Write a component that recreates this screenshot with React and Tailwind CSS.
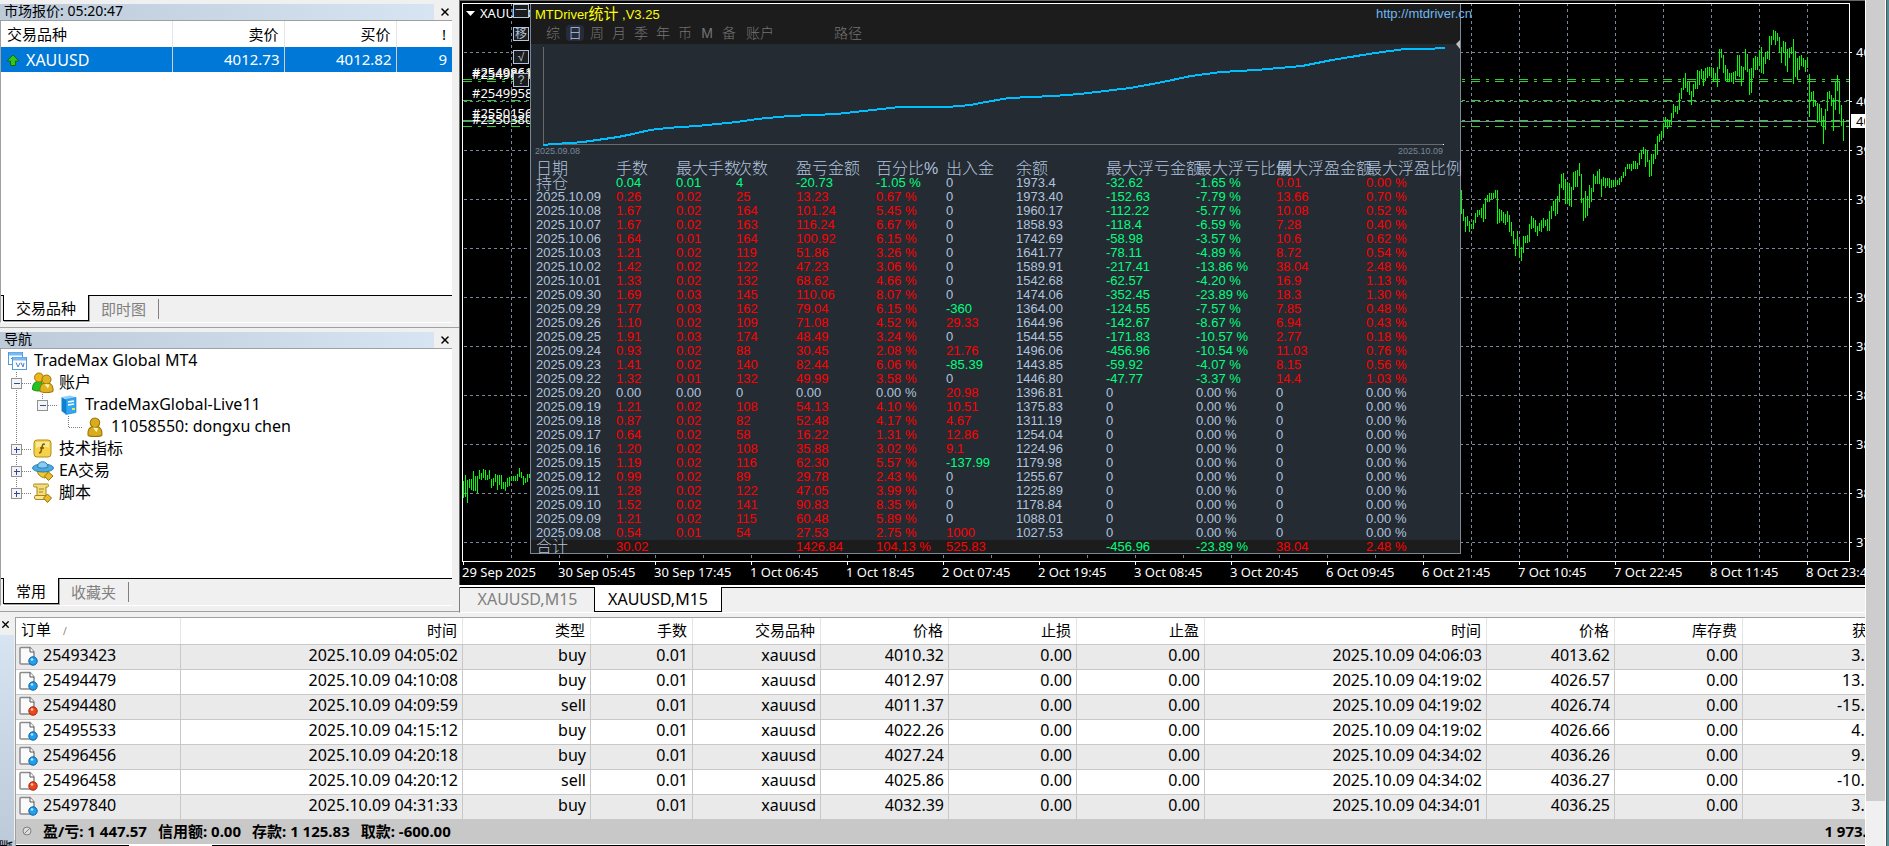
import { X } from "lucide-react";

const uiFont = "font-['Noto_Sans','Noto_Sans_CJK_SC',sans-serif]";
const panelFont = "font-['Liberation_Sans','Noto_Sans_CJK_SC',sans-serif]";

const timeLabels = [
  "29 Sep 2025",
  "30 Sep 05:45",
  "30 Sep 17:45",
  "1 Oct 06:45",
  "1 Oct 18:45",
  "2 Oct 07:45",
  "2 Oct 19:45",
  "3 Oct 08:45",
  "3 Oct 20:45",
  "6 Oct 09:45",
  "6 Oct 21:45",
  "7 Oct 10:45",
  "7 Oct 22:45",
  "8 Oct 11:45",
  "8 Oct 23:45",
];

const priceLabels = ["40", "40", "39", "39", "39", "39", "38", "38", "38", "38", "37"];

// high-low of each bar, three units per pixel
const barsLeft =
  "1443-1494 1425-1490 1440-1508 1437-1464 1437-1469 1413-1474 1428-1473 1428-1480 1410-1438 1419-1440 1407-1434 1410-1440 1425-1440 1410-1437 1437-1463 1434-1458 1422-1445 1425-1470 1425-1455 1425-1466 1446-1468 1446-1473 1434-1461 1431-1458 1428-1444 1428-1442 1428-1442 1421-1442 1404-1430 1416-1434 1428-1455 1434-1449 1421-1446 1421-1434";
const barsRight =
  "570-641 627-662 650-696 648-679 662-695 672-686 660-686 640-668 630-650 630-646 624-655 612-665 594-657 585-605 579-605 579-597 579-597 570-594 570-671 627-668 630-664 636-668 642-674 633-665 645-696 666-707 692-731 716-768 693-739 720-774 741-783 708-759 708-729 705-729 672-726 648-686 654-683 660-695 678-707 669-693 660-695 654-683 660-677 657-692 633-692 618-656 603-632 597-647 588-641 552-605 522-563 519-570 537-611 546-611 549-617 561-620 516-569 513-560 510-560 489-528 522-609 594-662 573-653 588-647 555-623 564-605 522-575 528-551 513-551 507-551 537-590 531-557 534-563 534-557 534-563 540-563 540-560 540-560 540-555 534-554 528-546 516-533 501-528 492-506 492-506 492-512 483-506 483-506 489-506 459-494 450-476 441-461 447-500 450-485 480-530 462-527 462-491 432-476 408-464 402-426 393-419 369-412 351-381 357-386 360-380 339-375 312-354 318-336 318-342 279-330 264-297 234-270 219-263 246-276 243-285 273-315 252-290 243-266 210-267 213-255 207-236 213-258 204-244 201-234 201-228 201-231 204-245 219-239 201-261 147-207 147-174 165-219 195-242 207-245 219-245 219-247 216-251 213-240 165-228 165-230 198-258 201-241 147-210 162-216 207-285 204-279 174-234 168-209 171-209 150-198 141-218 171-221 156-191 153-177 108-180 108-134 90-120 93-134 99-123 111-158 141-189 123-158 126-198 147-216 144-174 141-161 117-251 153-231 174-240 168-210 165-198 174-200 180-215 171-204 222-350 276-303 273-320 300-318 309-368 312-362 324-378 348-432 327-389 276-333 273-297 285-317 294-392 246-330 225-272 243-342 315-377 357-423";

function Bars({ data, x }) {
  return data.split(" ").map((bar, i) => {
    const [hi, lo] = bar.split("-").map((v) => Math.round(v / 3));
    return (
      <rect key={i} x={x + i * 2} y={hi} width="1" height={lo - hi} fill="#00ff00" />
    );
  });
}

function PriceChart() {
  return (
    <svg
      className="absolute inset-0 w-full h-full font-['Noto_Sans',sans-serif] text-[13px]"
      shapeRendering="crispEdges"
      aria-label="XAUUSD M15"
    >
      <g transform="translate(-459 0)">
        <rect x="459" y="0" width="2000" height="1" fill="#696969" />
        <rect x="459" y="0" width="1" height="585" fill="#696969" />
        <g stroke="#778899" strokeDasharray="3 3">
          {priceLabels.map((_, i) => (
            <line key={i} x1="464" x2="1849" y1={52.5 + i * 49} y2={52.5 + i * 49} />
          ))}
          {Array.from({ length: 28 }, (_, i) => (
            <line key={i} x1={511.5 + i * 48} x2={511.5 + i * 48} y1="3" y2="558" />
          ))}
        </g>
        <g stroke="#32cd32" strokeDasharray="9 6 3 6">
          {[79, 81, 100, 120, 126].map((y) => (
            <line key={y} x1="463" x2="1849" y1={y + 0.5} y2={y + 0.5} />
          ))}
        </g>
        <rect x="463" y="121" width="1386" height="1" fill="#778899" />
        <Bars data={barsLeft} x={463} />
        <Bars data={barsRight} x={1461} />

        <path d="M462.5 561V3.5H1849.5V561.5H462" fill="none" stroke="#fff" />
        <g fill="#fff">
          {timeLabels.map((label, i) => (
            <g key={label}>
              <rect x={463 + i * 96} y="562" width="1" height="3" />
              <text x={462 + i * 96} y="577">
                {label}
              </text>
            </g>
          ))}
          {priceLabels.map((label, i) => (
            <g key={i}>
              <rect x="1850" y={52 + i * 49} width="2" height="1" />
              <text x="1856" y={57 + i * 49}>
                {label}
              </text>
            </g>
          ))}
          <rect x="1851" y="114" width="40" height="14" />
          <text x="1856" y="126" fill="#000">
            4012.73
          </text>
          <path d="M466 11h9l-4.5 5z" shapeRendering="auto" />
          <text x="480" y="18">
            XAUUSD,M15
          </text>
          <text x="472" y="77">#25498613</text>
          <text x="472" y="79">#25498617</text>
          <text x="472" y="98">#25499582</text>
          <text x="472" y="118">#25501562</text>
          <text x="472" y="124">#25503802</text>
        </g>
      </g>
    </svg>
  );
}

const views = ["综", "日", "周", "月", "季", "年", "币", "M", "备"];

const statHeads = [
  "日期",
  "手数",
  "最大手数",
  "次数",
  "盈亏金额",
  "百分比%",
  "出入金",
  "余额",
  "最大浮亏金额",
  "最大浮亏比例",
  "最大浮盈金额",
  "最大浮盈比例",
];

const statRows = [
  ["持仓", "0.04", "0.01", "4", "-20.73", "-1.05 %", "0", "1973.4", "-32.62", "-1.65 %", "0.01", "0.00 %"],
  ["2025.10.09", "0.26", "0.02", "25", "13.23", "0.67 %", "0", "1973.40", "-152.63", "-7.79 %", "13.66", "0.70 %"],
  ["2025.10.08", "1.67", "0.02", "164", "101.24", "5.45 %", "0", "1960.17", "-112.22", "-5.77 %", "10.08", "0.52 %"],
  ["2025.10.07", "1.67", "0.02", "163", "116.24", "6.67 %", "0", "1858.93", "-118.4", "-6.59 %", "7.28", "0.40 %"],
  ["2025.10.06", "1.64", "0.01", "164", "100.92", "6.15 %", "0", "1742.69", "-58.98", "-3.57 %", "10.6", "0.62 %"],
  ["2025.10.03", "1.21", "0.02", "119", "51.86", "3.26 %", "0", "1641.77", "-78.11", "-4.89 %", "8.72", "0.54 %"],
  ["2025.10.02", "1.42", "0.02", "122", "47.23", "3.06 %", "0", "1589.91", "-217.41", "-13.86 %", "38.04", "2.48 %"],
  ["2025.10.01", "1.33", "0.02", "132", "68.62", "4.66 %", "0", "1542.68", "-62.57", "-4.20 %", "16.9", "1.13 %"],
  ["2025.09.30", "1.69", "0.03", "145", "110.06", "8.07 %", "0", "1474.06", "-352.45", "-23.89 %", "18.3", "1.30 %"],
  ["2025.09.29", "1.77", "0.03", "162", "79.04", "6.15 %", "-360", "1364.00", "-124.55", "-7.57 %", "7.85", "0.48 %"],
  ["2025.09.26", "1.10", "0.02", "109", "71.08", "4.52 %", "29.33", "1644.96", "-142.67", "-8.67 %", "6.94", "0.43 %"],
  ["2025.09.25", "1.91", "0.03", "174", "48.49", "3.24 %", "0", "1544.55", "-171.83", "-10.57 %", "2.77", "0.18 %"],
  ["2025.09.24", "0.93", "0.02", "88", "30.45", "2.08 %", "21.76", "1496.06", "-456.96", "-10.54 %", "11.03", "0.76 %"],
  ["2025.09.23", "1.41", "0.02", "140", "82.44", "6.06 %", "-85.39", "1443.85", "-59.92", "-4.07 %", "8.15", "0.56 %"],
  ["2025.09.22", "1.32", "0.01", "132", "49.99", "3.58 %", "0", "1446.80", "-47.77", "-3.37 %", "14.4", "1.03 %"],
  ["2025.09.20", "0.00", "0.00", "0", "0.00", "0.00 %", "20.98", "1396.81", "0", "0.00 %", "0", "0.00 %"],
  ["2025.09.19", "1.21", "0.02", "108", "54.13", "4.10 %", "10.51", "1375.83", "0", "0.00 %", "0", "0.00 %"],
  ["2025.09.18", "0.87", "0.02", "82", "52.48", "4.17 %", "4.67", "1311.19", "0", "0.00 %", "0", "0.00 %"],
  ["2025.09.17", "0.64", "0.02", "58", "16.22", "1.31 %", "12.86", "1254.04", "0", "0.00 %", "0", "0.00 %"],
  ["2025.09.16", "1.20", "0.02", "108", "35.88", "3.02 %", "9.1", "1224.96", "0", "0.00 %", "0", "0.00 %"],
  ["2025.09.15", "1.19", "0.02", "116", "62.30", "5.57 %", "-137.99", "1179.98", "0", "0.00 %", "0", "0.00 %"],
  ["2025.09.12", "0.99", "0.02", "89", "29.78", "2.43 %", "0", "1255.67", "0", "0.00 %", "0", "0.00 %"],
  ["2025.09.11", "1.28", "0.02", "122", "47.05", "3.99 %", "0", "1225.89", "0", "0.00 %", "0", "0.00 %"],
  ["2025.09.10", "1.52", "0.02", "141", "90.83", "8.35 %", "0", "1178.84", "0", "0.00 %", "0", "0.00 %"],
  ["2025.09.09", "1.21", "0.02", "115", "60.48", "5.89 %", "0", "1088.01", "0", "0.00 %", "0", "0.00 %"],
  ["2025.09.08", "0.54", "0.01", "54", "27.53", "2.75 %", "1000", "1027.53", "0", "0.00 %", "0", "0.00 %"],
];

const statTotal = ["合计", "30.02", "", "", "1426.84", "104.13 %", "525.83", "", "-456.96", "-23.89 %", "38.04", "2.48 %"];

// which column decides the sign of each cell: lots and counts follow the
// profit, every ratio follows its own amount
const signColumn = [null, 4, 4, 4, 4, 4, 6, null, 8, 8, 10, 10];

function cellColor(row, i) {
  const value = signColumn[i] === null ? 0 : parseFloat(row[signColumn[i]]);
  if (!value) return "text-[#b0c4de]";
  return value < 0 ? "text-[#00ff7f]" : "text-[#ff0000]";
}

function StatCells({ row }) {
  return row.map((cell, i) => (
    <td key={i} className={`p-0 ${i === 0 ? "pl-[5px]" : ""} ${cellColor(row, i)}`}>
      {/^\d/.test(cell) || i > 0 ? (
        cell
      ) : (
        <span className="block h-[13px] text-base leading-[13px] font-light">{cell}</span>
      )}
    </td>
  ));
}

function StatsPanel() {
  return (
    <section
      className={`absolute left-[71px] top-[4px] w-[931px] flex flex-col border-x border-b border-[#778899] bg-[#252b33] text-[13px] leading-[14px] ${panelFont}`}
    >
      <header className="h-10 bg-[#1c1c1c]">
        <div className="flex h-5 items-center justify-between pl-1">
          <h1 className="whitespace-nowrap text-[#ffff00]">
            MTDriver<span className="text-[15px]">统计</span> ,V3.25
          </h1>
          <a href="http://mtdriver.cn" className="-mr-3 whitespace-nowrap text-[#6cb8f0]">
            http://mtdriver.cn
          </a>
        </div>
        <nav className="flex h-[18px] items-center gap-1 pl-[13px] text-sm leading-4 font-light text-[#757575]">
          {views.map((v) => (
            <button
              key={v}
              className={
                v === "日"
                  ? "h-4 w-[18px] rounded-sm bg-[#252b3a] text-[#b0c4de]"
                  : "h-4 w-[18px]"
              }
            >
              {v}
            </button>
          ))}
          <button className="ml-1 h-4">账户</button>
          <button className="ml-14 h-4">路径</button>
        </nav>
      </header>

      <div className="relative h-[118px]">
        <svg className="absolute inset-0 h-full w-full overflow-visible" aria-hidden="true">
          <g transform="translate(-531 -44)">
            <path d="M543.5 47V144.5H1443" fill="none" stroke="#696969" />
            <rect x="1443" y="144" width="1" height="1" fill="#fff" />
            <polyline
              points="543,145 553,144 572,143 583,142 597,140 618,137 633,134 650,130 667,128 697,126 717,124 737,122 757,119 790,116 813,115 837,114 863,111 900,107 947,107 971,105 980,103 1009,98 1053,96 1080,94 1130,88 1158,83 1191,76 1221,72 1256,70 1302,66 1332,60 1375,53 1405,49 1426,49 1445,48"
              fill="none"
              stroke="#00bfff"
              strokeWidth="2"
              shapeRendering="crispEdges"
            />
            <path d="M1460 40l-4 4 4 5z" fill="#c0c0c0" />
          </g>
        </svg>
        <div className="flex h-full items-end justify-between pb-1 pl-1 pr-[17px] text-[9px] text-[#778899]">
          <span>2025.09.08</span>
          <span>2025.10.09</span>
        </div>
      </div>

      <table className="w-full table-fixed border-collapse whitespace-nowrap text-left">
        <colgroup>
          <col className="w-[85px]" />
          <col className="w-[60px]" />
          <col className="w-[60px]" />
          <col className="w-[60px]" />
          <col className="w-[80px]" />
          <col className="w-[70px]" />
          <col className="w-[70px]" />
          <col className="w-[90px]" />
          <col className="w-[90px]" />
          <col className="w-[80px]" />
          <col className="w-[90px]" />
          <col />
        </colgroup>
        <thead>
          <tr className="h-[14px] text-base leading-[14px] text-[#b0c4de]">
            {statHeads.map((h, i) => (
              <th key={h} className={`p-0 font-light ${i === 0 ? "pl-[5px]" : ""}`}>
                {h}
              </th>
            ))}
          </tr>
        </thead>
        <tbody>
          {statRows.map((row) => (
            <tr key={row[0]} className="h-[14px]">
              <StatCells row={row} />
            </tr>
          ))}
        </tbody>
        <tfoot>
          <tr className="h-[13px] bg-[#1c1c1c] leading-[13px]">
            <StatCells row={statTotal} />
          </tr>
        </tfoot>
      </table>
    </section>
  );
}

function ChartWindow() {
  return (
    <div className="flex min-w-0 flex-1 flex-col">
      <div className="relative flex-1 overflow-hidden bg-black">
        <PriceChart />
        <div
          className={`absolute left-[54px] top-[4px] flex flex-col gap-[9px] text-[12px] text-[#b0c4de] ${panelFont}`}
        >
          {["一", "移", "√", "?"].map((label) => (
            <button
              key={label}
              className="h-[14px] w-4 border border-[#b0c4de] bg-[#1c1c1c] leading-[11px]"
            >
              {label}
            </button>
          ))}
        </div>
        <StatsPanel />
      </div>
      <div className="h-8 shrink-0 border-t-2 border-white">
        <div className="flex h-[26px] items-start border-b border-l border-b-white border-l-[#808080] text-base shadow-[inset_0_1px_0_#000]">
          <button className="ml-[1px] h-6 w-[133px] leading-[22px] text-[#808080]">XAUUSD,M15</button>
          <button className="h-[25px] w-32 border-x border-b border-black bg-white leading-[22px]">
            XAUUSD,M15
          </button>
        </div>
      </div>
    </div>
  );
}

function PanelTitle({ children }) {
  return (
    <div className="flex h-[17px] shrink-0 items-center">
      <h2 className="h-4 flex-1 bg-linear-to-r from-[#bccad9] to-[#d7e4f2] pl-1 text-[14px] leading-[14px]">
        {children}
      </h2>
      <button className="flex w-[25px] justify-center pr-1" aria-label="关闭">
        <X size={12} strokeWidth={3} />
      </button>
    </div>
  );
}

function PanelTabs({ active, other }) {
  return (
    <div className="flex h-[27px] shrink-0 items-start border-t border-black bg-[#f0f0f0] pl-[2px] text-[15px]">
      <button className="-mt-px h-[26px] border-x border-b border-black bg-white px-3 leading-[22px] shadow-[1px_1px_0_#a0a0a0]">
        {active}
      </button>
      <button className="mt-[3px] h-5 border-r border-[#808080] px-3 leading-4 text-[#808080]">
        {other}
      </button>
    </div>
  );
}

function MarketWatch() {
  return (
    <section className="flex h-[328px] shrink-0 flex-col border-b border-[#a0a0a0] pt-[3px] pb-1">
      <PanelTitle>市场报价: 05:20:47</PanelTitle>
      <div className="mr-[7px] flex flex-1 flex-col border-t border-l border-b border-[#a0a0a0] border-b-white bg-white">
        <table className="w-full table-fixed border-collapse text-[15px]">
          <colgroup>
            <col />
            <col className="w-28" />
            <col className="w-28" />
            <col className="w-14" />
          </colgroup>
          <thead>
            <tr className="h-[26px]">
              <th className="border-r border-[#e5e5e5] p-0 pl-[6px] text-left font-normal">交易品种</th>
              <th className="border-r border-[#e5e5e5] p-0 pr-[5px] text-right font-normal">卖价</th>
              <th className="border-r border-[#e5e5e5] p-0 pr-[5px] text-right font-normal">买价</th>
              <th className="p-0 pr-[6px] text-right font-normal">!</th>
            </tr>
          </thead>
          <tbody>
            <tr className="h-[25px] bg-[#0078d7] text-white">
              <td className="border-r border-[#d0d0d0] p-0 pl-[5px]">
                <span className="flex items-center gap-[6px]">
                  <svg width="14" height="14" viewBox="0 0 14 14" aria-hidden="true">
                    <path
                      d="M7 2l6 6H9.500v4.500h-5V8H1z"
                      fill="#2fc81c"
                      stroke="#14690c"
                      strokeLinejoin="round"
                    />
                  </svg>
                  <span className="text-base leading-6">XAUUSD</span>
                </span>
              </td>
              <td className="border-r border-[#d0d0d0] p-0 pr-1 text-right">4012.73</td>
              <td className="border-r border-[#d0d0d0] p-0 pr-1 text-right">4012.82</td>
              <td className="p-0 pr-[5px] text-right">9</td>
            </tr>
          </tbody>
        </table>
        <div className="flex-1" />
        <PanelTabs active="交易品种" other="即时图" />
      </div>
    </section>
  );
}

// dotted connectors and the +/- box in front of a tree row
function Branch({ width, trunk = "full", box, boxAt = 15, elbow }) {
  return (
    <svg width={width} height="22" className="shrink-0" shapeRendering="crispEdges" aria-hidden="true">
      <g stroke="#808080" strokeDasharray="1 1">
        {trunk === "full" && <path d="M15.500 0V22" />}
        {trunk === "end" && <path d="M15.500 0V11" />}
        {box && boxAt !== 15 && <path d={`M${boxAt + 0.5} 0V11`} />}
        {elbow && <path d={`M${elbow + 0.5} 0V11.500H${width}`} fill="none" />}
        {box && <path d={`M${boxAt} 11.500H${width}`} />}
      </g>
      {box && (
        <>
          <rect x={boxAt - 4.5} y="6.500" width="10" height="10" fill="#f4f4f4" stroke="#919191" />
          <rect x={boxAt - 2} y="11" width="6" height="1" fill="#2b4b9b" />
          {box === "+" && <rect x={boxAt} y="9" width="1" height="6" fill="#2b4b9b" />}
        </>
      )}
    </svg>
  );
}

function Person({ fill, stroke = "#9a7400" }) {
  return (
    <g fill={fill} stroke={stroke}>
      <path d="M1 17.500c-.6-4.500 1-7.500 4-8.500h5c3 1 4.500 4 4 8.500-3 1.500-10 1.500-13 0z" />
      <circle cx="7.500" cy="5.500" r="4.500" />
      <path d="M5.500 10l3.500 4.500 1.500-4" fill="#fff3b0" stroke="none" />
    </g>
  );
}

const treeIcons = {
  root: (
    <svg width="20" height="20" viewBox="0 0 20 20" aria-hidden="true">
      <rect x=".5" y="1.500" width="14" height="12" fill="#fff" stroke="#4f9be0" />
      <path d="M1 3h13" stroke="#79b8f0" strokeWidth="3" />
      <path d="M3 8l2-2 2 3 2-3" fill="none" stroke="#5580c0" />
      <rect x="4.500" y="6.500" width="14" height="12" fill="#fff" stroke="#4f9be0" />
      <path d="M5 8h13" stroke="#79b8f0" strokeWidth="3" />
      <path d="M8 11.500l2 4.500 2-4M13 11.500l2 4.500 1-4" fill="none" stroke="#5580c0" />
    </svg>
  ),
  accounts: (
    <svg width="22" height="22" viewBox="0 0 22 22" aria-hidden="true">
      <path d="M.5 17.500c0-5 1.500-7 4.500-8h5v9c-4 .8-7 .6-9.500-1z" fill="#22c322" stroke="#0c8a12" />
      <circle cx="7" cy="5.500" r="4.500" fill="#f0b51e" stroke="#a57a05" />
      <g transform="translate(7 2)">
        <Person fill="#e0b322" />
      </g>
    </svg>
  ),
  server: (
    <svg width="16" height="20" viewBox="0 0 16 20" aria-hidden="true">
      <path d="M.5 2L5 4.500v15L.5 16z" fill="#0f7fd0" />
      <path d="M.5 2L9 .5l6 2L5 4.500z" fill="#8fd3ff" />
      <path d="M5 4.500l10-2v15l-10 2z" fill="#2ea7f5" stroke="#1779c4" strokeWidth=".6" />
      <path d="M7 7l6-1M7 10l6-1" stroke="#fff" strokeWidth="1.500" />
      <rect x="11" y="13" width="3" height="2" fill="#f6e04a" />
    </svg>
  ),
  user: (
    <svg width="17" height="20" viewBox="0 0 16 19" aria-hidden="true">
      <Person fill="#d9ac1f" />
    </svg>
  ),
  indicator: (
    <svg width="20" height="20" viewBox="0 0 20 20" aria-hidden="true">
      <rect x="1" y="1" width="17" height="17" rx="3" fill="#f6d24c" stroke="#b48c10" />
      <path d="M3 3h13v6c-4-2-9-2-13 0z" fill="#fbe99a" />
      <path d="M12 5.500c-1.500-1-2.300-.2-2.700 1.500L8 12.500c-.3 1.200-1 1.500-2 1M7 9h4" fill="none" stroke="#7a5b00" strokeWidth="1.500" />
    </svg>
  ),
  expert: (
    <svg width="22" height="20" viewBox="0 0 22 20" aria-hidden="true">
      <path d="M5 8c0 5 3 8 8 9l4-8z" fill="#f2c833" stroke="#a57a05" />
      <ellipse cx="11" cy="7" rx="10.500" ry="4" fill="#4fa9dc" stroke="#2a7db0" />
      <path d="M5.500 6c0-7 10-7 10.500 0-3 1.500-8 1.500-10.500 0z" fill="#86cdf0" stroke="#2a7db0" />
      <path d="M16.500 11l4.500 4-4.500 4.500-4-4.500z" fill="#e8bd2d" stroke="#9a7400" />
    </svg>
  ),
  script: (
    <svg width="20" height="20" viewBox="0 0 20 20" aria-hidden="true">
      <path d="M1.500 1h13c1.500 0 1.500 3 0 3H13v9H4V4H1.500C0 4 0 1 1.500 1z" fill="#f3dc7c" stroke="#a88618" />
      <path d="M2 12.500h10l2 4H3c-1.500 0-2-2.500-1-4z" fill="#f7e69a" stroke="#a88618" />
      <path d="M6 6h5M6 9h4" stroke="#a88618" />
      <path d="M14.500 11l4 4-4 4.500-4-4.500z" fill="#e8bd2d" stroke="#9a7400" />
    </svg>
  ),
};

const tree = [
  { label: "TradeMax Global MT4", icon: "root", branch: { width: 5, trunk: "none" } },
  { label: "账户", icon: "accounts", branch: { width: 30, box: "-" } },
  { label: "TradeMaxGlobal-Live11", icon: "server", branch: { width: 56, box: "-", boxAt: 41 } },
  { label: "11058550: dongxu chen", icon: "user", branch: { width: 82, elbow: 67 } },
  { label: "技术指标", icon: "indicator", branch: { width: 30, box: "+" } },
  { label: "EA交易", icon: "expert", branch: { width: 30, box: "+" } },
  { label: "脚本", icon: "script", branch: { width: 30, box: "+", trunk: "end" } },
];

function Navigator() {
  return (
    <section className="mb-[5px] flex flex-1 flex-col border-b border-[#a0a0a0] pt-[3px] pb-[5px]">
      <PanelTitle>导航</PanelTitle>
      <div className="mr-[7px] flex flex-1 flex-col border-t border-l border-b border-[#a0a0a0] border-b-white bg-white">
        <ul className="flex-1 pt-px text-base leading-5">
          {tree.map(({ label, icon, branch }) => (
            <li key={label} className="flex h-[22px] items-center whitespace-nowrap">
              <Branch {...branch} />
              <span className="flex w-6 shrink-0 justify-center">{treeIcons[icon]}</span>
              <span className="ml-1 pb-[2px]">{label}</span>
            </li>
          ))}
        </ul>
        <PanelTabs active="常用" other="收藏夹" />
      </div>
    </section>
  );
}

const orderHeads = ["时间", "类型", "手数", "交易品种", "价格", "止损", "止盈", "时间", "价格", "库存费", "获利"];

const orders = [
  ["25493423", "2025.10.09 04:05:02", "buy", "0.01", "xauusd", "4010.32", "0.00", "0.00", "2025.10.09 04:06:03", "4013.62", "0.00", "3.30"],
  ["25494479", "2025.10.09 04:10:08", "buy", "0.01", "xauusd", "4012.97", "0.00", "0.00", "2025.10.09 04:19:02", "4026.57", "0.00", "13.60"],
  ["25494480", "2025.10.09 04:09:59", "sell", "0.01", "xauusd", "4011.37", "0.00", "0.00", "2025.10.09 04:19:02", "4026.74", "0.00", "-15.37"],
  ["25495533", "2025.10.09 04:15:12", "buy", "0.01", "xauusd", "4022.26", "0.00", "0.00", "2025.10.09 04:19:02", "4026.66", "0.00", "4.40"],
  ["25496456", "2025.10.09 04:20:18", "buy", "0.01", "xauusd", "4027.24", "0.00", "0.00", "2025.10.09 04:34:02", "4036.26", "0.00", "9.02"],
  ["25496458", "2025.10.09 04:20:12", "sell", "0.01", "xauusd", "4025.86", "0.00", "0.00", "2025.10.09 04:34:02", "4036.27", "0.00", "-10.41"],
  ["25497840", "2025.10.09 04:31:33", "buy", "0.01", "xauusd", "4032.39", "0.00", "0.00", "2025.10.09 04:34:01", "4036.25", "0.00", "3.86"],
];

function OrderIcon({ type }) {
  return (
    <svg width="20" height="20" viewBox="0 0 20 20" className="shrink-0" aria-hidden="true">
      <path d="M2 1.500h9l4 4.500v12H2c-.6 0-1-.4-1-1v-14.500c0-.6.4-1 1-1z" fill="#fafafa" stroke="#8a8a8a" strokeWidth="1.500" />
      <path d="M11 1.500V6h4" fill="#fff" stroke="#555" />
      <circle
        cx="14"
        cy="15"
        r="4.200"
        fill={type === "buy" ? "#1e9ff0" : "#f0471a"}
        stroke={type === "buy" ? "#0d5f9c" : "#9c2408"}
      />
      <circle cx="13" cy="13.500" r="1.300" fill="#fff" opacity=".7" />
    </svg>
  );
}

function Terminal() {
  return (
    <section className="flex shrink-0">
      <div className="flex w-[15px] shrink-0 flex-col">
        <button className="mb-1 flex h-[14px] items-center" aria-label="关闭">
          <X size={11} strokeWidth={3} />
        </button>
        <div className="w-[14px] flex-1 bg-linear-to-t from-[#bccad9] to-[#d7e4f2]" />
        <div className="h-[6px] overflow-hidden bg-[#bccad9] text-[14px] leading-[14px]">
          <span className="block rotate-180 [writing-mode:vertical-rl]">端</span>
        </div>
      </div>
      <div className="min-w-0 flex-1 overflow-hidden border-t border-l border-[#a0a0a0]">
        <table className="w-[1872px] table-fixed border-separate border-spacing-0 whitespace-nowrap text-right text-[15px] leading-[22px]">
          <colgroup>
            <col className="w-[165px]" />
            <col className="w-[282px]" />
            <col className="w-[128px]" />
            <col className="w-[102px]" />
            <col className="w-[128px]" />
            <col className="w-[128px]" />
            <col className="w-[128px]" />
            <col className="w-[128px]" />
            <col className="w-[282px]" />
            <col className="w-[128px]" />
            <col className="w-[128px]" />
            <col className="w-[145px]" />
          </colgroup>
          <thead>
            <tr className="h-[26px] bg-white">
              <th className="border-r border-[#e5e5e5] p-0 pb-[2px] pl-[5px] text-left font-normal">
                订单<span className="ml-3 text-[10px] text-[#808080]">/</span>
              </th>
              {orderHeads.map((h, i) => (
                <th key={i} className="border-r border-[#e5e5e5] p-0 pr-[5px] pb-[2px] font-normal">
                  {h}
                </th>
              ))}
            </tr>
          </thead>
          <tbody className="text-base">
            {orders.map((order) => (
              <tr key={order[0]} className="h-[25px] odd:bg-[#eaeaea] even:bg-white">
                {order.map((cell, i) => (
                  <td
                    key={i}
                    className="h-[25px] border-t border-r border-[#c8c8c8] p-0 pr-1 pb-[3px] leading-[21px]"
                  >
                    {i === 0 ? (
                      <span className="flex h-[21px] items-center gap-1 pl-[3px]">
                        <OrderIcon type={order[2]} />
                        {cell}
                      </span>
                    ) : (
                      cell
                    )}
                  </td>
                ))}
              </tr>
            ))}
          </tbody>
          <tfoot>
            <tr className="h-[25px] bg-[#c8c8c8] font-bold">
              <td colSpan={11} className="p-0 pb-[2px]">
                <span className="flex items-center gap-[11px] pl-[6px]">
                  <svg width="10" height="10" viewBox="0 0 10 10" aria-hidden="true">
                    <circle cx="5" cy="5" r="4" fill="#ddd" stroke="#808080" />
                    <path d="M2.500 7.500l5-5" stroke="#808080" />
                  </svg>
                  <span>盈/亏: 1 447.57</span>
                  <span>信用额: 0.00</span>
                  <span>存款: 1 125.83</span>
                  <span>取款: -600.00</span>
                </span>
              </td>
              <td className="p-0 pr-1 pb-[2px]">1 973.40</td>
            </tr>
          </tfoot>
        </table>
        <div className="flex h-[2px] border-t border-white">
          <div className="w-[113px] bg-black" />
          <div className="w-[83px] bg-white" />
          <div className="flex-1 bg-black" />
        </div>
      </div>
    </section>
  );
}

export default function App() {
  return (
    <main className={`flex h-screen min-h-[640px] overflow-hidden bg-[#f0f0f0] text-black ${uiFont}`}>
      <div className="flex min-w-0 flex-1 flex-col">
        <div className="flex min-h-0 flex-1">
          <aside className="flex w-[459px] shrink-0 flex-col">
            <MarketWatch />
            <Navigator />
          </aside>
          <ChartWindow />
        </div>
        <Terminal />
      </div>
      <div className="flex w-[21px] shrink-0 flex-col border-x border-white">
        <div className="flex-1 bg-[#cdcdcd]" />
        <div className="h-[45px]" />
      </div>
      <div className="w-[3px] shrink-0 border-l border-[#3c5a5e] bg-[#558b92]" />
    </main>
  );
}
